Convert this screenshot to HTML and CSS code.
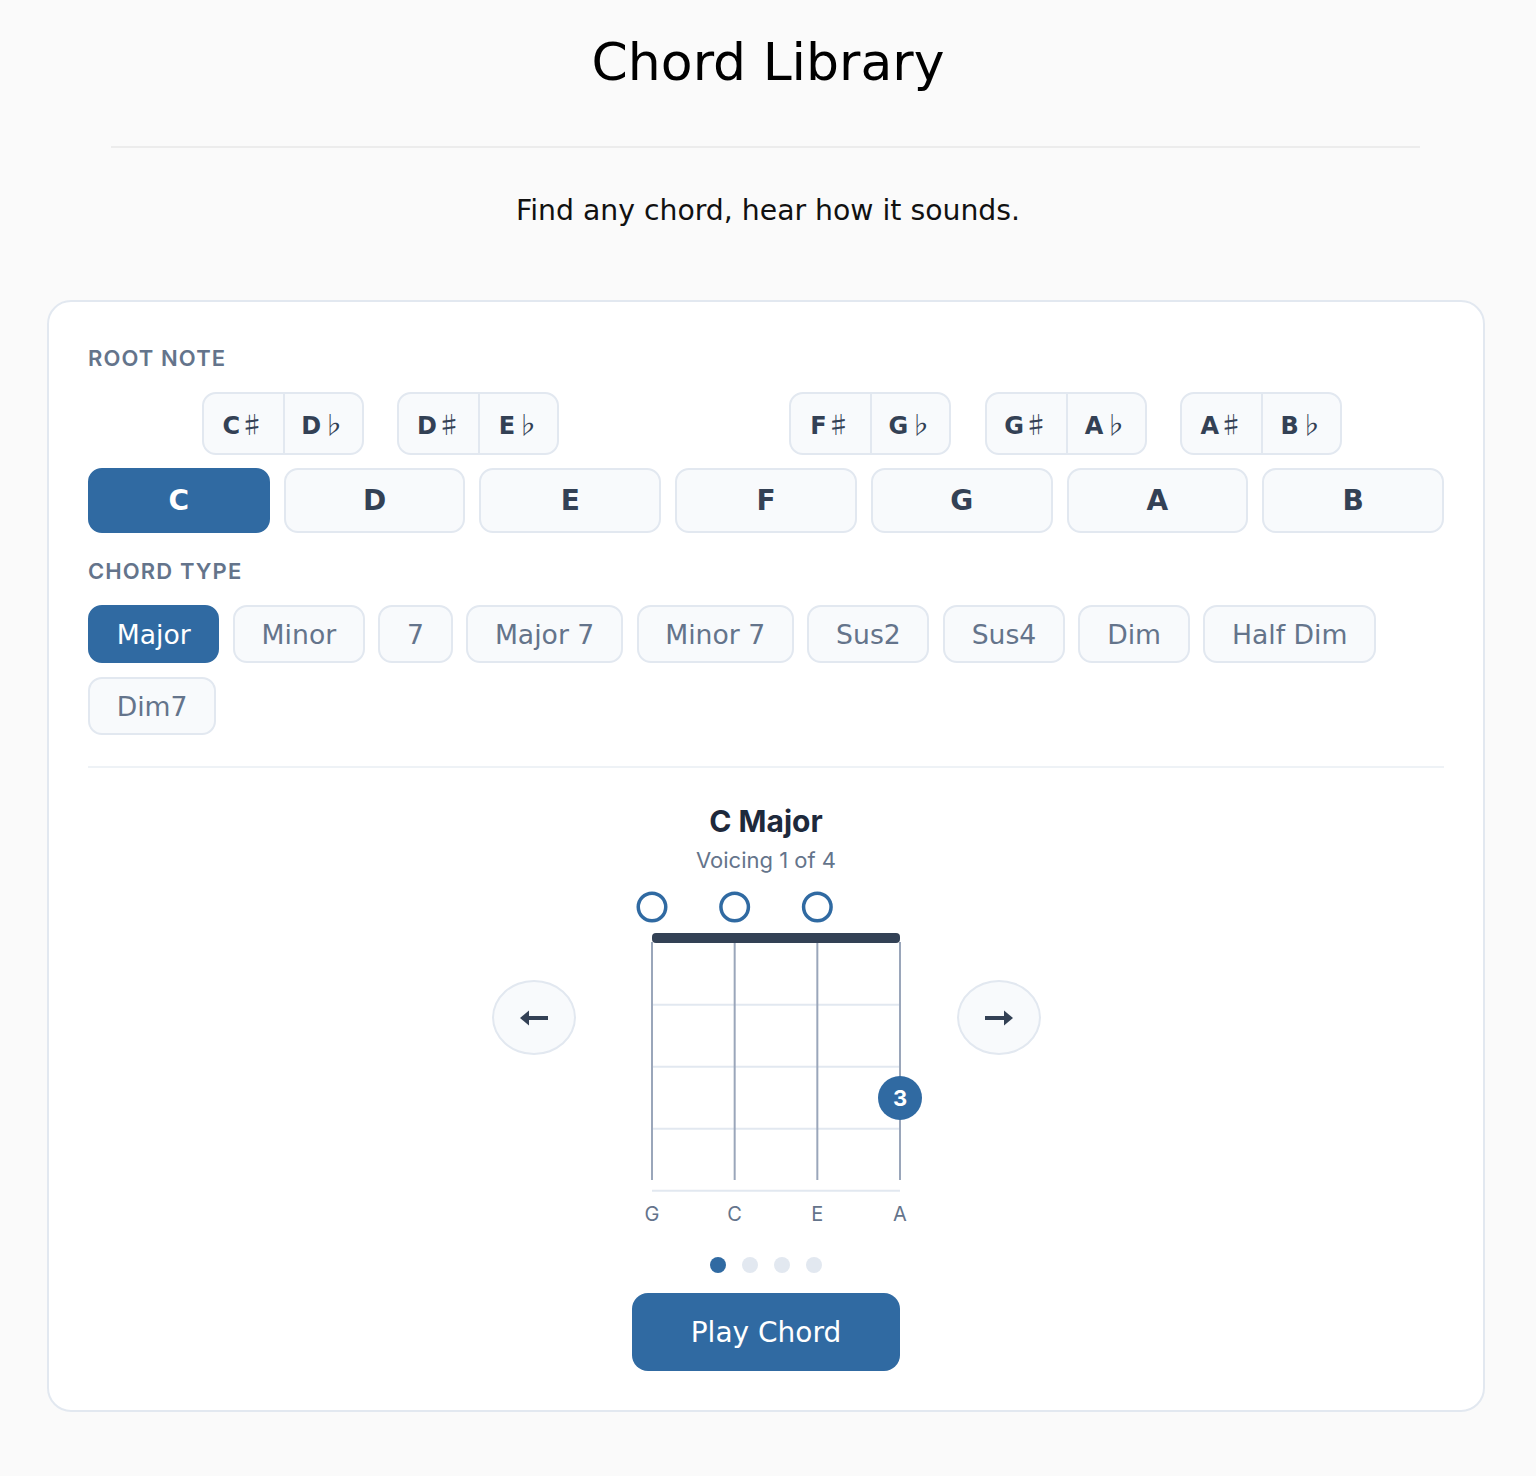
FILE: index.html
```html
<!DOCTYPE html>
<html lang="en">
<head>
    <meta charset="utf-8">
    <title>Chord Library</title>
    <link rel="stylesheet" href="styles.css">
</head>
<body>
<header class="page-head">
    <h1>Chord Library</h1>
    <hr class="rule">
    <p class="tagline">Find any chord, hear how it sounds.</p>
</header>

<main class="card">
    <div class="label">Root Note</div>
    <div class="sharps">
        <div class="pair col1"><button>C<span class="acc">♯</span></button><button>D<span class="acc">♭</span></button></div>
        <div class="pair col2"><button>D<span class="acc">♯</span></button><button>E<span class="acc">♭</span></button></div>
        <div class="pair col4"><button>F<span class="acc">♯</span></button><button>G<span class="acc">♭</span></button></div>
        <div class="pair col5"><button>G<span class="acc">♯</span></button><button>A<span class="acc">♭</span></button></div>
        <div class="pair col6"><button>A<span class="acc">♯</span></button><button>B<span class="acc">♭</span></button></div>
    </div>
    <div class="naturals">
        <button class="note active">C</button>
        <button class="note">D</button>
        <button class="note">E</button>
        <button class="note">F</button>
        <button class="note">G</button>
        <button class="note">A</button>
        <button class="note">B</button>
    </div>

    <div class="label label-gap">Chord Type</div>
    <div class="types">
        <button class="type active">Major</button>
        <button class="type">Minor</button>
        <button class="type">7</button>
        <button class="type">Major 7</button>
        <button class="type">Minor 7</button>
        <button class="type">Sus2</button>
        <button class="type">Sus4</button>
        <button class="type">Dim</button>
        <button class="type">Half Dim</button>
        <button class="type">Dim7</button>
    </div>

    <div class="divider"></div>

    <section class="voicing">
        <h2>C Major</h2>
        <p class="sub">Voicing 1 of 4</p>
        <div class="viewer">
            <button class="nav" aria-label="Previous voicing">
                <svg width="28" height="16" viewBox="0 0 28 16">
                    <polygon points="0,8 9,0.5 9,15.5" fill="#334155"/>
                    <rect x="7" y="6" width="21" height="4" fill="#334155"/>
                </svg>
            </button>
            <svg class="diagram" width="333" height="350" viewBox="0 0 333 350">
                <!-- open strings -->
                <circle cx="52" cy="27" r="13.75" fill="none" stroke="#306aa2" stroke-width="3.5"/>
                <circle cx="134.67" cy="27" r="13.75" fill="none" stroke="#306aa2" stroke-width="3.5"/>
                <circle cx="217.33" cy="27" r="13.75" fill="none" stroke="#306aa2" stroke-width="3.5"/>
                <!-- frets -->
                <line x1="52" y1="124.7" x2="300" y2="124.7" stroke="#e2e8f0" stroke-width="2"/>
                <line x1="52" y1="186.7" x2="300" y2="186.7" stroke="#e2e8f0" stroke-width="2"/>
                <line x1="52" y1="248.7" x2="300" y2="248.7" stroke="#e2e8f0" stroke-width="2"/>
                <line x1="52" y1="310.7" x2="300" y2="310.7" stroke="#e2e8f0" stroke-width="2"/>
                <!-- strings -->
                <line x1="52" y1="62" x2="52" y2="300" stroke="#9aa6ba" stroke-width="2"/>
                <line x1="134.67" y1="62" x2="134.67" y2="300" stroke="#9aa6ba" stroke-width="2"/>
                <line x1="217.33" y1="62" x2="217.33" y2="300" stroke="#9aa6ba" stroke-width="2"/>
                <line x1="300" y1="62" x2="300" y2="300" stroke="#9aa6ba" stroke-width="2"/>
                <!-- nut -->
                <rect x="52" y="53" width="248" height="10" rx="4" fill="#334155"/>
                <!-- finger -->
                <circle cx="300" cy="218" r="22" fill="#306aa2"/>
                <text x="300" y="226" class="finger">3</text>
                <!-- string names -->
                <text x="52" y="341" class="string-name">G</text>
                <text x="134.67" y="341" class="string-name">C</text>
                <text x="217.33" y="341" class="string-name">E</text>
                <text x="300" y="341" class="string-name">A</text>
            </svg>
            <button class="nav" aria-label="Next voicing">
                <svg width="28" height="16" viewBox="0 0 28 16">
                    <polygon points="28,8 19,0.5 19,15.5" fill="#334155"/>
                    <rect x="0" y="6" width="21" height="4" fill="#334155"/>
                </svg>
            </button>
        </div>
        <div class="dots">
            <span class="dot on"></span>
            <span class="dot"></span>
            <span class="dot"></span>
            <span class="dot"></span>
        </div>
        <button class="play">Play Chord</button>
    </section>
</main>
</body>
</html>
```

FILE: styles.css
```css
html {
    background-color: #fafafa;
}

body {
    margin: 0;
    padding: 0 0 64px 0;
    font-family: 'Inter', sans-serif;
    color: #1e293b;
}

button {
    font-family: 'DejaVu Sans', sans-serif;
    cursor: pointer;
}

.page-head {
    text-align: center;
    font-family: 'DejaVu Sans', sans-serif;
    color: #000000;
}

.page-head h1 {
    margin: 32px 0 0 0;
    font-size: 52px;
    font-weight: normal;
    line-height: normal;
}

.rule {
    width: 1309px;
    height: 0;
    margin: 54px 0 0 111px;
    border: none;
    border-top: 2px solid #ececec;
}

.tagline {
    margin: 46px 0 0 0;
    font-size: 28.3px;
    line-height: normal;
    color: #111111;
}

.card {
    display: block;
    box-sizing: border-box;
    width: 1438px;
    margin: 73px 0 0 47px;
    padding: 39px;
    background: #ffffff;
    border: 2px solid #e2e8f0;
    border-radius: 24px;
}

.label {
    margin: 4px 0 21px 0;
    font-size: 22px;
    line-height: 26px;
    font-weight: 600;
    letter-spacing: 0.05em;
    text-transform: uppercase;
    color: #64748b;
}

.label-gap {
    margin-top: 25px;
}

/* root notes */
.sharps,
.naturals {
    display: grid;
    grid-template-columns: repeat(7, 1fr);
    column-gap: 14px;
}

.sharps {
    margin-bottom: 13px;
}

.pair {
    grid-row: 1;
    justify-self: center;
    margin-left: 12px;
    display: flex;
    height: 63px;
    box-sizing: border-box;
    border: 2px solid #e2e8f0;
    border-radius: 14px;
    background: #f8fafc;
    overflow: hidden;
}

.col1 { grid-column: 1 / span 2; }
.col2 { grid-column: 2 / span 2; }
.col4 { grid-column: 4 / span 2; }
.col5 { grid-column: 5 / span 2; }
.col6 { grid-column: 6 / span 2; }

.pair button {
    width: 79px;
    padding: 0;
    border: none;
    background: transparent;
    font-size: 24px;
    font-weight: bold;
    color: #334155;
}

.pair button + button {
    border-left: 2px solid #e2e8f0;
}

.acc {
    font-family: 'Noto Sans CJK JP', 'DejaVu Sans', sans-serif;
    font-weight: 400;
    font-size: 24px;
}

.note {
    height: 65px;
    padding: 0;
    border: 2px solid #e2e8f0;
    border-radius: 14px;
    background: #f8fafc;
    font-size: 28px;
    font-weight: bold;
    color: #334155;
}

.note.active,
.type.active {
    background: #306aa2;
    border-color: #306aa2;
    color: #ffffff;
}

/* chord types */
.types {
    display: flex;
    flex-wrap: wrap;
    gap: 14px 13.5px;
}

.type {
    height: 58px;
    padding: 0 26.7px;
    border: 2px solid #e2e8f0;
    border-radius: 14px;
    background: #f8fafc;
    font-size: 26.67px;
    color: #64748b;
}

.divider {
    height: 2px;
    margin: 31px 0 0 0;
    background: #eef2f6;
}

/* voicing viewer */
.voicing {
    margin-top: 35px;
    text-align: center;
}

.voicing h2 {
    margin: 0;
    font-size: 30px;
    line-height: 36px;
    font-weight: 700;
    color: #1e293b;
}

.sub {
    margin: 8px 0 0 0;
    font-size: 22px;
    line-height: 26px;
    color: #64748b;
}

.viewer {
    display: flex;
    justify-content: center;
    align-items: flex-start;
    gap: 24px;
    margin-top: 7px;
}

.diagram {
    display: block;
}

.finger {
    font-family: 'Inter', sans-serif;
    font-size: 22px;
    font-weight: 700;
    fill: #ffffff;
    text-anchor: middle;
}

.string-name {
    font-family: 'Inter', sans-serif;
    font-size: 20px;
    fill: #64748b;
    text-anchor: middle;
}

.nav {
    display: flex;
    align-items: center;
    justify-content: center;
    width: 84px;
    height: 75px;
    margin-top: 100px;
    padding: 0;
    border: 2px solid #e2e8f0;
    border-radius: 50%;
    background: #f8fafc;
}

.nav svg {
    display: block;
}

.dots {
    display: flex;
    justify-content: center;
    gap: 16px;
    margin-top: 27px;
}

.dot {
    width: 16px;
    height: 16px;
    border-radius: 50%;
    background: #e2e8f0;
}

.dot.on {
    background: #306aa2;
}

.play {
    display: block;
    width: 268px;
    height: 78px;
    margin: 20px auto 0 auto;
    padding: 0;
    border: none;
    border-radius: 16px;
    background: #306aa2;
    font-size: 28px;
    color: #ffffff;
}
```
